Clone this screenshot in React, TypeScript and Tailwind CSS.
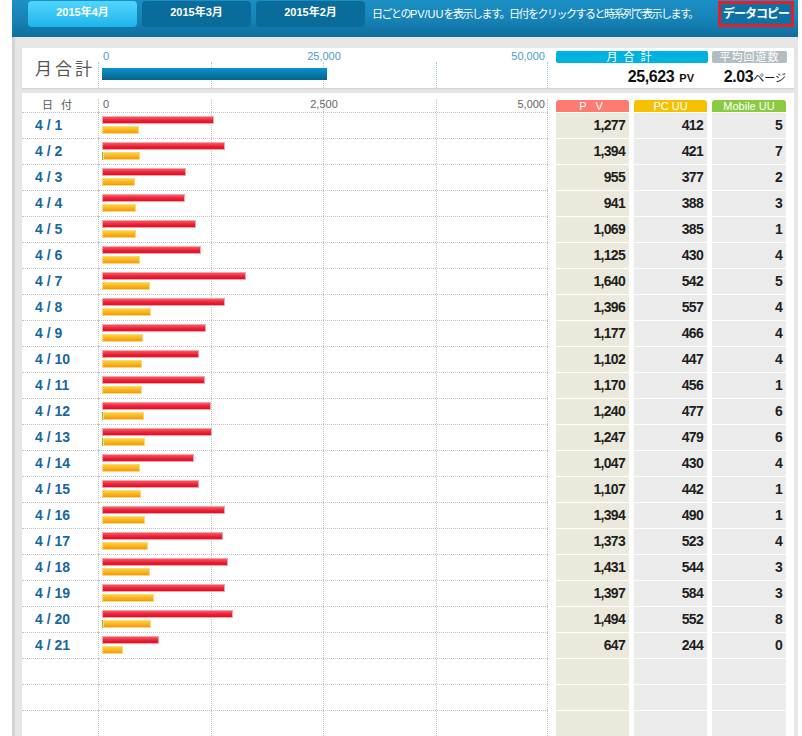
import React from "react";

type Day = { d: string; pv: number; pc: number; mb: number };

const days: Day[] = [
  { d: "4 / 1", pv: 1277, pc: 412, mb: 5 },
  { d: "4 / 2", pv: 1394, pc: 421, mb: 7 },
  { d: "4 / 3", pv: 955, pc: 377, mb: 2 },
  { d: "4 / 4", pv: 941, pc: 388, mb: 3 },
  { d: "4 / 5", pv: 1069, pc: 385, mb: 1 },
  { d: "4 / 6", pv: 1125, pc: 430, mb: 4 },
  { d: "4 / 7", pv: 1640, pc: 542, mb: 5 },
  { d: "4 / 8", pv: 1396, pc: 557, mb: 4 },
  { d: "4 / 9", pv: 1177, pc: 466, mb: 4 },
  { d: "4 / 10", pv: 1102, pc: 447, mb: 4 },
  { d: "4 / 11", pv: 1170, pc: 456, mb: 1 },
  { d: "4 / 12", pv: 1240, pc: 477, mb: 6 },
  { d: "4 / 13", pv: 1247, pc: 479, mb: 6 },
  { d: "4 / 14", pv: 1047, pc: 430, mb: 4 },
  { d: "4 / 15", pv: 1107, pc: 442, mb: 1 },
  { d: "4 / 16", pv: 1394, pc: 490, mb: 1 },
  { d: "4 / 17", pv: 1373, pc: 523, mb: 4 },
  { d: "4 / 18", pv: 1431, pc: 544, mb: 3 },
  { d: "4 / 19", pv: 1397, pc: 584, mb: 3 },
  { d: "4 / 20", pv: 1494, pc: 552, mb: 8 },
  { d: "4 / 21", pv: 647, pc: 244, mb: 0 },
];

// 5,000 -> 440px
const SCALE = 440 / 5000;

const fmt = (n: number) => n.toLocaleString("en-US");

function GridLines({ color }: { color: string }) {
  return (
    <div className="absolute inset-0 grid grid-cols-4">
      <div className={`border-l border-dotted ${color}`} />
      <div className={`border-l border-dotted ${color}`} />
      <div className={`border-l border-dotted ${color}`} />
      <div className={`border-x border-dotted ${color}`} />
    </div>
  );
}

function Row({ day }: { day?: Day }) {
  return (
    <div className="flex h-[26px]">
      <div className="w-[76px] border-t border-dotted border-[#c4c4c4] pl-[13px] text-[14px] font-bold leading-[25px] text-[#17689c]">
        {day?.d}
      </div>
      <div className="relative w-[450px] border-t border-dotted border-[#c4c4c4]">
        <GridLines color="border-[#c4c4c4]" />
        {day && (
          <div className="relative flex flex-col gap-[2px] pl-[4px] pt-[3px]">
            <div
              className="h-[8px] border border-[#f6a0a8] bg-gradient-to-b from-[#f45866] via-[#ec2238] to-[#dc0f28]"
              style={{ width: day.pv * SCALE }}
            />
            <div className="flex h-[8px]">
              <div className="h-full bg-[#7cc23a]" style={{ width: day.mb * SCALE }} />
              <div
                className="h-full border border-[#fbd880] bg-gradient-to-b from-[#fcd22e] to-[#f4980e]"
                style={{ width: day.pc * SCALE }}
              />
            </div>
          </div>
        )}
      </div>
      <div className="ml-[8px] flex gap-[5px] text-[14px] font-bold leading-[25px] tracking-[-0.7px] text-[#1e1e1e]">
        <div className="mt-[1px] h-[25px] w-[73px] bg-[#ebe9dc] pr-[4px] text-right">
          {day ? fmt(day.pv) : ""}
        </div>
        <div className="mt-[1px] h-[25px] w-[73px] bg-[#ebebeb] pr-[4px] text-right">
          {day ? fmt(day.pc) : ""}
        </div>
        <div className="mt-[1px] h-[25px] w-[74px] bg-[#ebebeb] pr-[4px] text-right">
          {day ? fmt(day.mb) : ""}
        </div>
      </div>
    </div>
  );
}

export default function App() {
  const total = days.reduce((s, d) => s + d.pv, 0);

  return (
    <div className="min-h-screen bg-white font-['Liberation_Sans','Noto_Sans_CJK_JP',sans-serif]">
      <div className="ml-[12px] h-[736px] w-[786px] overflow-hidden bg-[#e6e6e6]">
        {/* Header */}
        <div className="flex h-[37px] bg-gradient-to-b from-[#1b8fc4] via-[#1784b8] to-[#0e6e9f] pl-[16px] pr-[4px]">
          <div className="flex gap-[5px] pt-[1px]">
            <div className="h-[26px] w-[109px] rounded-[4px] bg-gradient-to-b from-[#4fd6ff] to-[#1cb4ea] pt-[3px] text-center text-[11px] font-bold text-white">
              2015年4月
            </div>
            <div className="h-[26px] w-[109px] rounded-[4px] bg-[#0a6c9b] pt-[3px] text-center text-[11px] font-bold text-white">
              2015年3月
            </div>
            <div className="h-[26px] w-[109px] rounded-[4px] bg-[#0a6c9b] pt-[3px] text-center text-[11px] font-bold text-white">
              2015年2月
            </div>
          </div>
          <div className="ml-[7px] whitespace-nowrap pt-[6px] text-[11px] tracking-[-1.5px] text-white">
            日ごとの<span className="tracking-normal">PV/UU</span>を表示します。日付をクリックすると時系列で表示します。
          </div>
          <div className="ml-auto mt-[1px] flex h-[26px] w-[76px] items-center justify-center whitespace-nowrap border-[3px] border-[#e41e2a] bg-[#0d72a3] text-[12px] font-bold tracking-[-1px] text-white">
            データコピー
          </div>
        </div>

        <div className="border-l-[3px] border-[#d4d4d4] pl-[7px] pr-[4px] pt-[11px]">
          {/* Monthly total */}
          <div className="flex h-[40px] bg-white shadow-[0_1px_1px_rgba(0,0,0,0.08)]">
            <div className="flex w-[76px] items-center pl-[13px] pt-[4px] text-[17px] tracking-[3px] text-[#555]">
              月合計
            </div>
            <div className="flex w-[450px] flex-col">
              <div className="grid h-[14px] grid-cols-3 pl-[5px] pr-[3px] pt-[3px] text-[11px] leading-[11px] text-[#4d9bcc]">
                <span className="text-left">0</span>
                <span className="text-center">25,000</span>
                <span className="text-right">50,000</span>
              </div>
              <div className="relative h-[26px]">
                <GridLines color="border-[#9ccbe6]" />
                <div className="relative pl-[4px] pt-[6px]">
                  <div
                    className="h-[12px] bg-gradient-to-b from-[#0c93cc] to-[#05638c]"
                    style={{ width: total * (440 / 50000) }}
                  />
                </div>
              </div>
            </div>
            <div className="ml-[8px] flex w-[152px] flex-col pt-[3px]">
              <div className="h-[12px] rounded-[2px] bg-[#00b2e0] text-center text-[11px] leading-[12px] tracking-[6px] text-white">
                月合計
              </div>
              <div className="pr-[14px] pt-[2px] text-right text-[16px] font-bold tracking-[-0.4px] text-[#111]">
                {fmt(total)}
                <span className="ml-[5px] text-[11px] tracking-normal">PV</span>
              </div>
            </div>
            <div className="ml-[4px] flex w-[75px] flex-col pt-[3px]">
              <div className="h-[12px] rounded-[2px] bg-[#b1bcc3] text-center text-[11px] leading-[12px] tracking-[1px] text-white">
                平均回遊数
              </div>
              <div className="pr-[1px] pt-[2px] text-right text-[16px] font-bold tracking-[-0.4px] text-[#111]">
                2.03
                <span className="text-[11px] font-normal tracking-normal">ページ</span>
              </div>
            </div>
          </div>

          {/* Daily table */}
          <div className="mt-[5px] bg-white pb-[40px]">
            <div className="flex h-[19px]">
              <div className="w-[76px] pl-[20px] pt-[4px] text-[11px] tracking-[8px] text-[#555]">
                日付
              </div>
              <div className="relative w-[450px]">
                <div className="absolute inset-x-0 bottom-0 top-[6px]">
                  <GridLines color="border-[#c4c4c4]" />
                </div>
                <div className="relative grid grid-cols-3 pl-[5px] pr-[3px] pt-[6px] text-[11px] leading-[11px] text-[#666]">
                  <span className="text-left">0</span>
                  <span className="text-center">2,500</span>
                  <span className="text-right">5,000</span>
                </div>
              </div>
              <div className="ml-[8px] flex gap-[5px] pt-[7px] text-center text-[11px] leading-[12px] text-white">
                <div className="h-[12px] w-[73px] rounded-t-[3px] bg-[#ff7b72] tracking-[3px]">P V</div>
                <div className="h-[12px] w-[73px] rounded-t-[3px] bg-[#f6c200]">PC UU</div>
                <div className="h-[12px] w-[74px] rounded-t-[3px] bg-[#8acb42]">Mobile UU</div>
              </div>
            </div>
            {days.map((d) => (
              <Row key={d.d} day={d} />
            ))}
            <Row />
            <Row />
            <Row />
          </div>
        </div>
      </div>
    </div>
  );
}
